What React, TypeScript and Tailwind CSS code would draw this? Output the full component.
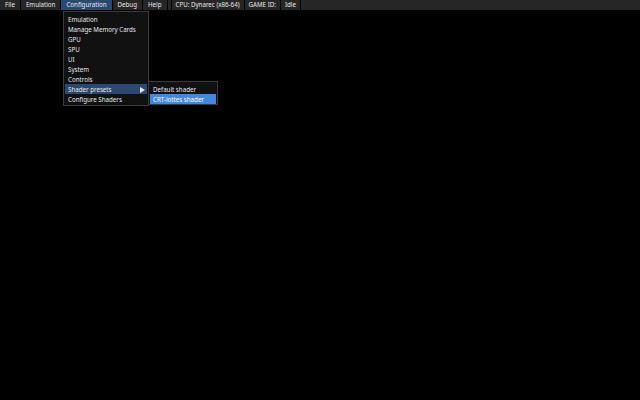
import React from 'react';

const menus = ["File", "Emulation", "Configuration", "Debug", "Help"];
const status = ["CPU: Dynarec (x86-64)", "GAME ID:", "Idle"];

const configItems = [
  "Emulation",
  "Manage Memory Cards",
  "GPU",
  "SPU",
  "UI",
  "System",
  "Controls",
  "Shader presets",
  "Configure Shaders",
];

export default function App() {
  return (
    <div
      className="relative w-[640px] h-[400px] bg-black text-[#e6e6e6] text-[6.2px] leading-[10px] overflow-hidden"
      style={{ fontFamily: '"Noto Sans", "Open Sans", sans-serif' }}
    >
      <div className="flex h-[10px] bg-[#262626]">
        {menus.map((m) => (
          <div
            key={m}
            className={
              "px-[5px] border-r border-black " +
              (m === "Configuration" ? "bg-[#2a4a72]" : "")
            }
          >
            {m}
          </div>
        ))}
        <div className="w-[4px] border-r border-black" />
        {status.map((s) => (
          <div key={s} className="px-[4px] border-r border-black">
            {s}
          </div>
        ))}
      </div>

      <div className="absolute left-[63px] top-[11px] w-[86px] bg-[#111111] border border-[#3a3a3a] pt-[2px] pb-[1px] px-[1px]">
        {configItems.map((item) => (
          <div
            key={item}
            className={
              "flex items-center justify-between h-[10px] pl-[3px] pr-[2px] pt-[1px] " +
              (item === "Shader presets" ? "bg-[#2a4870]" : "")
            }
          >
            <span>{item}</span>
            {item === "Shader presets" && (
              <svg width="6" height="6" viewBox="0 0 6 6">
                <path d="M1 0 L6 3 L1 6 Z" fill="#e6e6e6" />
              </svg>
            )}
          </div>
        ))}
      </div>

      <div className="absolute left-[148px] top-[81px] w-[70px] bg-[#111111] border border-[#3a3a3a] pt-[2px] px-[1px]">
        <div className="h-[10px] pl-[3px] pt-[1px] leading-[9px]">Default shader</div>
        <div className="h-[10px] pl-[3px] pt-[1px] leading-[9px] bg-[#4287e0] text-white">CRT-lottes shader</div>
      </div>
    </div>
  );
}
